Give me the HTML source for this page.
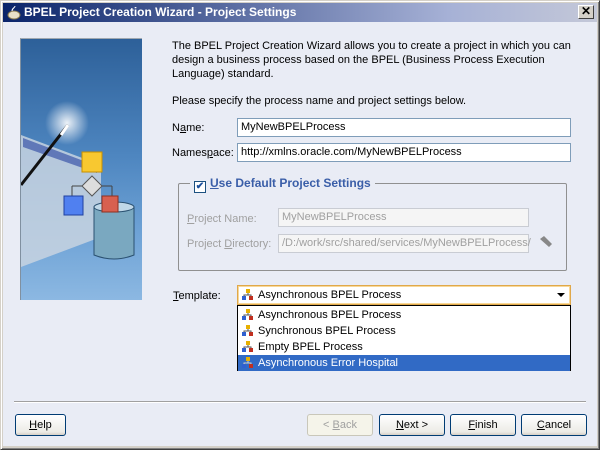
<!DOCTYPE html>
<html><head><style>
*{margin:0;padding:0;box-sizing:border-box}
body{width:600px;height:450px;background:#d4d0c8;font-family:"Liberation Sans",sans-serif;font-size:11px;color:#000;position:relative;overflow:hidden}
.a{position:absolute}
.win{left:0;top:0;width:600px;height:450px;border:1px solid #d4d0c8;border-right-color:#404040;border-bottom-color:#404040;box-shadow:inset 1px 1px #fff,inset -1px -1px #808080}
.title{left:3px;top:3px;width:594px;height:19px;background:linear-gradient(90deg,#0a246a,#a6b1d6 75%,#c4c8d8)}
.title span{position:absolute;left:21px;top:2px;color:#fff;font-weight:bold;font-size:12px}
.client{left:3px;top:22px;width:594px;height:424px;background:#e9ecf5}
.inp{background:#fff;border:1px solid #7f9db9;height:19px;padding:0 3px;line-height:17px;white-space:nowrap}
.dis{background:#f5f5f5;border:1px solid #c9ccd3;color:#a0a0a0;height:19px;padding:0 3px;line-height:17px;white-space:nowrap}
.btn{border:1px solid #003c74;border-radius:3px;background:linear-gradient(#fff,#ecebe6 85%,#d6d0c5);height:22px;text-align:center;line-height:20px}
.gl{color:#a0a0a0}
.it{height:16px;line-height:16px;padding-left:20px;position:relative;white-space:nowrap}
.ic{position:absolute;left:4px;top:2px;width:12px;height:12px}
</style></head><body>
<div class="a win"></div>
<div class="a title"><svg class="a" style="left:3px;top:2px" width="16" height="15"><ellipse cx="8" cy="10" rx="6" ry="4" fill="#e8e0c8" stroke="#8a7a50"/><path d="M6 6c0-3 3-3 3-5" stroke="#fff" fill="none"/></svg><span>BPEL Project Creation Wizard - Project Settings</span>
<div class="a" style="left:575px;top:2px;width:16px;height:14px;background:#d4d0c8;border:1px solid;border-color:#fff #404040 #404040 #fff;font-size:12px;font-weight:bold;line-height:11px;text-align:center">✕</div></div>
<div class="a client"></div>
<!-- image panel -->
<div class="a" style="left:20px;top:38px;width:122px;height:262px;background:linear-gradient(#2d6099,#4e86c0 45%,#6fa3d6 75%,#8cb8e2);border-top:1px solid #a0a8b0;border-left:1px solid #8090a0">
<svg width="122" height="262">
<radialGradient id="g"><stop offset="0" stop-color="#fff" stop-opacity=".9"/><stop offset="1" stop-color="#fff" stop-opacity="0"/></radialGradient>
<circle cx="46" cy="84" r="22" fill="url(#g)"/>
<path d="M0 96 L80 126 L80 198 L0 228 Z" fill="#c8d4e0" opacity=".85"/>
<path d="M2 99 L76 127 L76 134 L2 108Z" fill="#6078b8"/>
<path d="M47 86 L0 146" stroke="#111" stroke-width="3"/><path d="M47 86 L40 96" stroke="#fff" stroke-width="3"/>
<rect x="61" y="113" width="20" height="20" fill="#f8c830" stroke="#c89000"/>
<path d="M71 137l10 10-10 10-10-10z" fill="#ddd" stroke="#555"/>
<path d="M51 147h10M81 147h10M51 147v10M91 147v10" stroke="#444"/>
<rect x="43" y="157" width="19" height="19" fill="#5080f0" stroke="#2040a0"/>
<path d="M73 168 h40 v48 q-20 8 -40 0z" fill="#7aa8c0" stroke="#2a5070"/><ellipse cx="93" cy="168" rx="20" ry="5" fill="#c0d8e8" stroke="#2a5070"/>
<rect x="81" y="157" width="16" height="16" fill="#d86050" stroke="#903020"/>
</svg></div>
<div class="a" style="left:172px;top:39px;line-height:14px;width:420px">The BPEL Project Creation Wizard allows you to create a project in which you can design a business process based on the BPEL (Business Process Execution Language) standard.</div>
<div class="a" style="left:172px;top:95px">Please specify the process name and project settings below.</div>
<div class="a" style="left:172px;top:122px">N<u>a</u>me:</div>
<div class="a inp" style="left:237px;top:118px;width:334px">MyNewBPELProcess</div>
<div class="a" style="left:172px;top:147px">Names<u>p</u>ace:</div>
<div class="a inp" style="left:237px;top:143px;width:334px">http://xmlns.oracle.com/MyNewBPELProcess</div>
<div class="a" style="left:178px;top:183px;width:389px;height:88px;border:1px solid #909090;border-radius:2px"></div>
<div class="a" style="left:190px;top:176px;background:#e9ecf5;padding:0 4px;color:#3a5ea8;font-weight:bold;font-size:12px;line-height:14px"><span style="display:inline-block;width:12px;height:12px;border:1px solid #1c5180;background:#fff;vertical-align:-2px;font-size:10px;line-height:10px;text-align:center;color:#1c4f9c;margin-right:4px">✔</span><u>U</u>se Default Project Settings</div>
<div class="a gl" style="left:187px;top:213px"><u>P</u>roject Name:</div>
<div class="a dis" style="left:278px;top:208px;width:251px">MyNewBPELProcess</div>
<div class="a gl" style="left:187px;top:238px">Project <u>D</u>irectory:</div>
<div class="a dis" style="left:278px;top:234px;width:251px">/D:/work/src/shared/services/MyNewBPELProcess/</div>
<svg class="a" style="left:538px;top:235px" width="16" height="14"><path d="M2 4l4-3 8 8-3 3z" fill="#888"/></svg>
<div class="a" style="left:173px;top:290px"><u>T</u>emplate:</div>
<div class="a" style="left:237px;top:285px;width:334px;height:20px;background:#fff;border:1px solid #e0a84a;padding:3px 0 0 20px;box-shadow:inset 0 0 0 1px #f8d898">Asynchronous BPEL Process
<svg class="a" style="left:4px;top:3px" width="12" height="12"><rect x="4" y="0" width="4" height="4" fill="#e8b000"/><rect x="0" y="7" width="4" height="4" fill="#3060d0"/><rect x="7" y="7" width="4" height="4" fill="#c03020"/><path d="M6 4v2M2 7V6h7v1" stroke="#555" fill="none"/></svg>
<div class="a" style="right:5px;top:7px;border:4px solid transparent;border-top:4px solid #000;border-bottom:0;width:0"></div></div>
<div class="a" style="left:237px;top:305px;width:334px;height:66px;background:#fff;border:1px solid #000;padding-top:1px">
<div class="it">Asynchronous BPEL Process<svg class="ic"><rect x="4" y="0" width="4" height="4" fill="#e8b000"/><rect x="0" y="7" width="4" height="4" fill="#3060d0"/><rect x="7" y="7" width="4" height="4" fill="#c03020"/><path d="M6 4v2M2 7V6h7v1" stroke="#555" fill="none"/></svg></div>
<div class="it">Synchronous BPEL Process<svg class="ic"><rect x="4" y="0" width="4" height="4" fill="#e8b000"/><rect x="0" y="7" width="4" height="4" fill="#3060d0"/><rect x="7" y="7" width="4" height="4" fill="#c03020"/><path d="M6 4v2M2 7V6h7v1" stroke="#555" fill="none"/></svg></div>
<div class="it">Empty BPEL Process<svg class="ic"><rect x="4" y="0" width="4" height="4" fill="#e8b000"/><rect x="0" y="7" width="4" height="4" fill="#3060d0"/><rect x="7" y="7" width="4" height="4" fill="#c03020"/><path d="M6 4v2M2 7V6h7v1" stroke="#555" fill="none"/></svg></div>
<div class="it" style="background:#316ac5;color:#fff">Asynchronous Error Hospital<svg class="ic"><rect x="4" y="0" width="4" height="4" fill="#e8b000"/><rect x="0" y="7" width="4" height="4" fill="#3060d0"/><rect x="7" y="7" width="4" height="4" fill="#c03020"/><path d="M6 4v2M2 7V6h7v1" stroke="#ccc" fill="none"/></svg></div>
</div>
<div class="a" style="left:14px;top:401px;width:572px;height:2px;border-top:1px solid #a0a0a0;border-bottom:1px solid #fff"></div>
<div class="a btn" style="left:15px;top:414px;width:51px"><u>H</u>elp</div>
<div class="a btn" style="left:307px;top:414px;width:66px;border-color:#c9c7ba;color:#a0a0a0;background:#f5f4ea">&lt; <u>B</u>ack</div>
<div class="a btn" style="left:379px;top:414px;width:66px"><u>N</u>ext &gt;</div>
<div class="a btn" style="left:450px;top:414px;width:66px"><u>F</u>inish</div>
<div class="a btn" style="left:521px;top:414px;width:66px"><u>C</u>ancel</div>
</body></html>
